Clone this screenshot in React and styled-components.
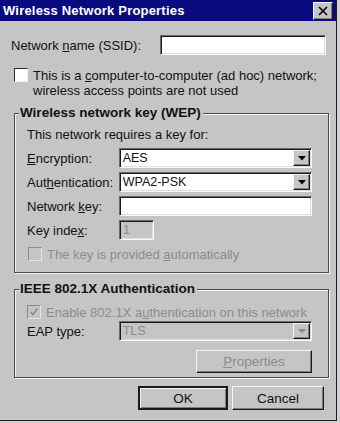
import React from 'react';
import styled, { createGlobalStyle, css } from 'styled-components';

const GlobalStyle = createGlobalStyle`
  html, body {
    margin: 0;
    padding: 0;
    background: #cfcfcf;
  }
  body {
    font-family: "Liberation Sans", Arial, sans-serif;
    font-size: 13px;
    color: #111;
  }
  * {
    box-sizing: border-box;
  }
`;

const Window = styled.div`
  width: 337px;
  height: 421px;
  background: #c5c5c5;
  border-right: 1px solid #1c1f2a;
  border-bottom: 1px solid #1c2230;
  display: flex;
  flex-direction: column;
`;

const TitleBar = styled.div`
  height: 21px;
  background: #0a0a80;
  display: flex;
  align-items: center;
  justify-content: space-between;
  padding: 0 3px 0 3px;
`;

const Title = styled.div`
  color: #fff;
  font-weight: bold;
  font-size: 13px;
  letter-spacing: 0.2px;
`;

const raised = css`
  background: #c5c5c5;
  border: 1px solid;
  border-color: #f4f4f4 #1a1a1a #1a1a1a #f4f4f4;
  box-shadow: inset -1px -1px 0 #7c7c7c;
`;

const sunken = css`
  border: 1px solid;
  border-color: #6a6a6a #fafafa #fafafa #6a6a6a;
  box-shadow: inset 1px 1px 0 #1a1a1a, inset -1px -1px 0 #dcdcdc;
`;

const CloseButton = styled.div`
  ${raised};
  width: 20px;
  height: 18px;
  display: flex;
  align-items: center;
  justify-content: center;
`;

const Body = styled.div`
  display: flex;
  flex-direction: column;
`;

const NameRow = styled.div`
  display: flex;
  align-items: center;
  margin-top: 14px;
  padding-left: 11px;
`;

const NameLabel = styled.div`
  width: 149px;
`;

const Field = styled.div`
  ${sunken};
  width: ${p => p.width}px;
  height: ${p => p.height || 20}px;
  background: ${p => (p.disabled ? '#c5c5c5' : '#fff')};
  color: ${p => (p.disabled ? '#8c8c8c' : '#111')};
  display: flex;
  align-items: center;
  padding-left: 3px;
  font-size: 12.5px;
`;

const CheckRow = styled.div`
  display: flex;
  align-items: flex-start;
  gap: 5px;
  margin-top: ${p => p.top || 0}px;
  padding-left: ${p => p.left || 0}px;
  color: ${p => (p.disabled ? '#8c8c8c' : '#111')};
  line-height: 15px;
`;

const Box = styled.div`
  flex-shrink: 0;
  width: 14px;
  height: 14px;
  border: 1px solid;
  background: ${p => (p.disabled ? '#c5c5c5' : '#fff')};
  border-color: ${p =>
    p.disabled ? '#8a8a8a #e4e4e4 #e4e4e4 #8a8a8a' : '#2a2a2a #f0f0f0 #f0f0f0 #2a2a2a'};
  display: flex;
  align-items: center;
  justify-content: center;
`;

const Group = styled.div`
  position: relative;
  margin: ${p => p.top}px 7px 0 14px;
  border: 1px solid #4a4a4a;
  box-shadow: inset 1px 1px 0 #f2f2f2, 1px 1px 0 #f2f2f2;
  padding: ${p => p.pad};
  display: flex;
  flex-direction: column;
`;

const Legend = styled.div`
  position: absolute;
  top: -9px;
  left: 4px;
  padding: 0 2px 0 1px;
  background: #c5c5c5;
  font-weight: bold;
  font-size: 13.5px;
  line-height: 16px;
`;

const Intro = styled.div`
  line-height: 15px;
  margin-bottom: 6px;
`;

const FormRow = styled.div`
  display: flex;
  align-items: center;
  margin-top: ${p => p.top || 0}px;
`;

const Label = styled.div`
  width: 92px;
`;

const SelectBox = styled(Field)`
  justify-content: space-between;
  padding-right: 1px;
`;

const ArrowButton = styled.div`
  ${raised};
  width: 17px;
  height: 16px;
  display: flex;
  align-items: center;
  justify-content: center;
`;

const ButtonRow = styled.div`
  display: flex;
  justify-content: flex-end;
  gap: 4px;
  margin-top: ${p => p.top || 0}px;
  padding-right: ${p => p.right || 0}px;
`;

const Button = styled.div`
  ${raised};
  width: ${p => p.width}px;
  height: ${p => p.height}px;
  display: flex;
  align-items: center;
  justify-content: center;
  font-size: 13.5px;
  color: ${p => (p.disabled ? '#8c8c8c' : '#111')};
  ${p =>
    p.primary &&
    css`
      border: 2px solid #111;
      border-color: #1a1a1a;
      box-shadow: inset 1px 1px 0 #f4f4f4, inset -1px -1px 0 #7c7c7c;
    `}
`;

const Arrow = ({ color = '#000' }) => (
  <svg width="8" height="5" viewBox="0 0 8 5">
    <path d="M0 0 H8 L4 4.5 Z" fill={color} />
  </svg>
);

const Check = () => (
  <svg width="10" height="10" viewBox="0 0 10 10">
    <path d="M1.5 5 L4 7.5 L8.5 1.5" stroke="#8a8a8a" strokeWidth="1.6" fill="none" />
  </svg>
);

const Select = ({ value, disabled }) => (
  <SelectBox width={194} disabled={disabled}>
    <span>{value}</span>
    <ArrowButton>
      <Arrow color={disabled ? '#8c8c8c' : '#000'} />
    </ArrowButton>
  </SelectBox>
);

const App = () => (
  <>
    <GlobalStyle />
    <Window>
      <TitleBar>
        <Title>Wireless Network Properties</Title>
        <CloseButton>
          <svg width="10" height="10" viewBox="0 0 10 10">
            <path d="M1 1 L9 9 M9 1 L1 9" stroke="#000" strokeWidth="1.6" />
          </svg>
        </CloseButton>
      </TitleBar>
      <Body>
        <NameRow>
          <NameLabel>
            Network <u>n</u>ame (SSID):
          </NameLabel>
          <Field width={166} />
        </NameRow>
        <CheckRow top={13} left={14}>
          <Box />
          <div>
            This is a <u>c</u>omputer-to-computer (ad hoc) network;
            <br />
            wireless access points are not used
          </div>
        </CheckRow>

        <Group top={15} pad="13px 16px 10px 12px">
          <Legend>Wireless network key (WEP)</Legend>
          <Intro>This network requires a key for:</Intro>
          <FormRow>
            <Label>
              <u>E</u>ncryption:
            </Label>
            <Select value="AES" />
          </FormRow>
          <FormRow top={4}>
            <Label>
              Aut<u>h</u>entication:
            </Label>
            <Select value="WPA2-PSK" />
          </FormRow>
          <FormRow top={4}>
            <Label>
              Network <u>k</u>ey:
            </Label>
            <Field width={194} />
          </FormRow>
          <FormRow top={4}>
            <Label>
              Key inde<u>x</u>:
            </Label>
            <Field width={35} disabled>
              1
            </Field>
          </FormRow>
          <CheckRow top={7} left={1} disabled>
            <Box disabled />
            <div>
              The key is provided <u>a</u>utomatically
            </div>
          </CheckRow>
        </Group>

        <Group top={16} pad="15px 16px 4px 12px">
          <Legend>IEEE 802.1X Authentication</Legend>
          <CheckRow left={-1} disabled>
            <Box disabled>
              <Check />
            </Box>
            <div>
              Enable 802.1X a<u>u</u>thentication on this network
            </div>
          </CheckRow>
          <FormRow top={1}>
            <Label>EAP type:</Label>
            <Select value="TLS" disabled />
          </FormRow>
          <ButtonRow top={9}>
            <Button width={116} height={23} disabled>
              <span>
                <u>P</u>roperties
              </span>
            </Button>
          </ButtonRow>
        </Group>

        <ButtonRow top={8} right={12}>
          <Button width={90} height={24} primary>
            OK
          </Button>
          <Button width={92} height={24}>
            Cancel
          </Button>
        </ButtonRow>
      </Body>
    </Window>
  </>
);

export default App;
